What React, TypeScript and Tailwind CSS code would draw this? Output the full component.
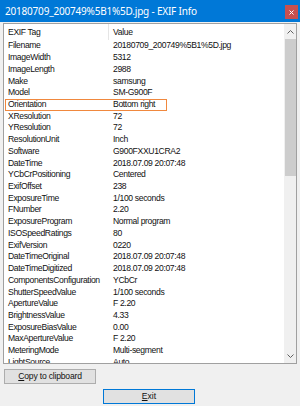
import React from "react";

const rows: [string, string][] = [
  ["Filename", "20180709_200749%5B1%5D.jpg"],
  ["ImageWidth", "5312"],
  ["ImageLength", "2988"],
  ["Make", "samsung"],
  ["Model", "SM-G900F"],
  ["Orientation", "Bottom right"],
  ["XResolution", "72"],
  ["YResolution", "72"],
  ["ResolutionUnit", "Inch"],
  ["Software", "G900FXXU1CRA2"],
  ["DateTime", "2018.07.09 20:07:48"],
  ["YCbCrPositioning", "Centered"],
  ["ExifOffset", "238"],
  ["ExposureTime", "1/100 seconds"],
  ["FNumber", "2.20"],
  ["ExposureProgram", "Normal program"],
  ["ISOSpeedRatings", "80"],
  ["ExifVersion", "0220"],
  ["DateTimeOriginal", "2018.07.09 20:07:48"],
  ["DateTimeDigitized", "2018.07.09 20:07:48"],
  ["ComponentsConfiguration", "YCbCr"],
  ["ShutterSpeedValue", "1/100 seconds"],
  ["ApertureValue", "F 2.20"],
  ["BrightnessValue", "4.33"],
  ["ExposureBiasValue", "0.00"],
  ["MaxApertureValue", "F 2.20"],
  ["MeteringMode", "Multi-segment"],
  ["LightSource", "Auto"],
  ["Flash", "Flash did not fire"],
];

export default function App() {
  return (
    <div
      className="w-[300px] h-[406px] bg-[#f0f0f0] flex flex-col overflow-hidden text-[#111]"
      style={{ fontFamily: '"Liberation Sans", Arial, sans-serif' }}
    >
      {/* Title bar */}
      <div className="h-[22px] bg-[#0078d7] flex items-center justify-between pl-[5px] pr-[2px] shrink-0">
        <span
          className="text-white text-[10px] tracking-[-0.2px] leading-none"
          style={{ fontFamily: '"Noto Sans", sans-serif' }}
        >
          20180709_200749%5B1%5D.jpg - EXIF Info
        </span>
        <div className="w-[13px] h-[14px] bg-[#c75050] flex items-center justify-center mt-[2px]">
          <svg width="5" height="5" viewBox="0 0 5 5">
            <path d="M0.5 0.5 L4.5 4.5 M4.5 0.5 L0.5 4.5" stroke="#fff" strokeWidth="1" />
          </svg>
        </div>
      </div>

      {/* List */}
      <div className="mt-[1px] ml-[3px] w-[294px] h-[341px] border border-[#a0a0a0] bg-white flex shrink-0">
        <div className="flex-1 flex flex-col overflow-hidden text-[8.6px] tracking-[-0.35px]">
          <div className="h-[16px] flex items-center shrink-0">
            <div className="w-[105px] pl-[4px] border-r border-[#e5e5e5] h-full flex items-center">EXIF Tag</div>
            <div className="pl-[4px]">Value</div>
          </div>
          {rows.map(([k, v]) => (
            <div
              key={k}
              className={
                "h-[11.73px] flex items-center shrink-0 " +
                (k === "Orientation" ? "relative" : "")
              }
            >
              {k === "Orientation" && (
                <div className="absolute left-[1px] top-0 w-[162px] h-[12px] border border-[#f0883e] pointer-events-none" />
              )}
              <div className="w-[105px] pl-[4px] whitespace-nowrap overflow-hidden">{k}</div>
              <div className="pl-[4px] whitespace-nowrap">{v}</div>
            </div>
          ))}
        </div>
        {/* Scrollbar */}
        <div className="w-[12px] bg-[#f0f0f0] flex flex-col items-center shrink-0">
          <div className="h-[15px] flex items-center justify-center">
            <svg width="7" height="4" viewBox="0 0 7 4">
              <path d="M0.5 3.5 L3.5 0.5 L6.5 3.5" stroke="#606060" strokeWidth="1" fill="none" />
            </svg>
          </div>
          <div className="w-[11px] h-[137px] bg-[#cdcdcd]" />
          <div className="flex-1" />
          <div className="h-[15px] flex items-center justify-center">
            <svg width="7" height="4" viewBox="0 0 7 4">
              <path d="M0.5 0.5 L3.5 3.5 L6.5 0.5" stroke="#606060" strokeWidth="1" fill="none" />
            </svg>
          </div>
        </div>
      </div>

      {/* Buttons */}
      <div className="mt-[5px] ml-[4px] w-[92px] h-[15px] bg-[#e1e1e1] border border-[#adadad] flex items-center justify-center text-[8.6px] tracking-[-0.2px] shrink-0">
        <span className="block first-letter:underline">Copy to clipboard</span>
      </div>
      <div className="mt-[5px] ml-[103px] w-[92px] h-[15px] bg-[#e1e1e1] border border-[#0078d7] flex items-center justify-center text-[8.6px] shrink-0">
        <span className="block first-letter:underline">Exit</span>
      </div>
    </div>
  );
}
